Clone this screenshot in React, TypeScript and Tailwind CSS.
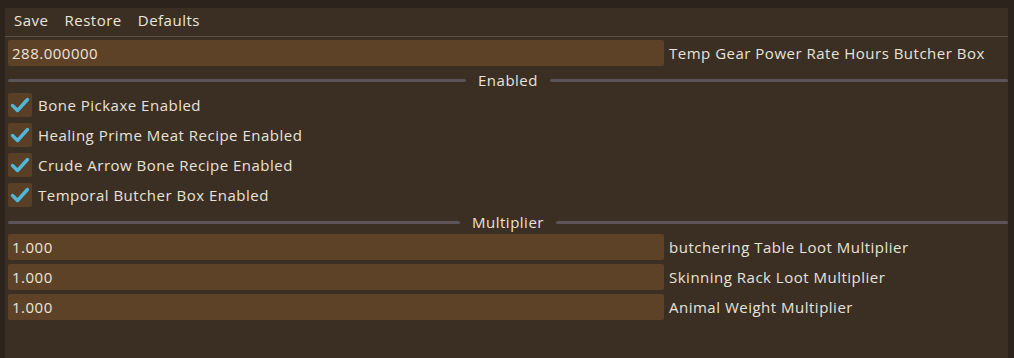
const FONT = { fontFamily: '"Open Sans", "Noto Sans", sans-serif', letterSpacing: "0.5px" };

const checks = [
  "Bone Pickaxe Enabled",
  "Healing Prime Meat Recipe Enabled",
  "Crude Arrow Bone Recipe Enabled",
  "Temporal Butcher Box Enabled",
];

const multipliers = [
  { value: "1.000", label: "butchering Table Loot Multiplier" },
  { value: "1.000", label: "Skinning Rack Loot Multiplier" },
  { value: "1.000", label: "Animal Weight Multiplier" },
];

function Field({ value, label }: { value: string; label: string }) {
  return (
    <div className="flex h-[30px] items-center gap-[5px]">
      <div className="flex h-[26px] w-[656px] items-center rounded-[2px] bg-[#5d4228] px-[4px] text-[#eee4d8]">
        {value}
      </div>
      <span className="text-[#e9e2d8]">{label}</span>
    </div>
  );
}

function Divider({ title }: { title: string }) {
  return (
    <div className="flex h-[22px] items-center gap-[12px] pt-[2px]">
      <div className="h-[3px] flex-1 rounded-full bg-[#5d5459]" />
      <span className="text-[#e9e2d8]">{title}</span>
      <div className="h-[3px] flex-1 rounded-full bg-[#5d5459]" />
    </div>
  );
}

function Check({ label }: { label: string }) {
  return (
    <div className="flex h-[30px] items-center gap-[6px]">
      <div className="flex h-[24px] w-[24px] items-center justify-center rounded-[2px] bg-[#5a3f27]">
        <svg width="20" height="18" viewBox="0 0 20 18" fill="none">
          <path d="M2.5 9.5 L7.5 14.5 L17.5 3.5" stroke="#4fb8da" strokeWidth="3.4" strokeLinecap="round" strokeLinejoin="round" />
        </svg>
      </div>
      <span className="text-[#e9e2d8]">{label}</span>
    </div>
  );
}

export default function App() {
  return (
    <div className="h-[358px] w-[1014px] bg-[#2b231c] pl-[5px] pr-[6px] pt-[8px] text-[15px]" style={FONT}>
      <div className="h-full bg-[#3b2f24]">
        <div className="flex h-[29px] items-center gap-[16px] border-b border-[#5a4f46] px-[9px] pb-[4px] text-[#ece5dc]">
          <span>Save</span>
          <span>Restore</span>
          <span>Defaults</span>
        </div>
        <div className="pl-[3px] pt-[1px]">
          <Field value="288.000000" label="Temp Gear Power Rate Hours Butcher Box" />
          <Divider title="Enabled" />
          {checks.map((c) => (
            <Check key={c} label={c} />
          ))}
          <Divider title="Multiplier" />
          {multipliers.map((m) => (
            <Field key={m.label} value={m.value} label={m.label} />
          ))}
        </div>
      </div>
    </div>
  );
}
